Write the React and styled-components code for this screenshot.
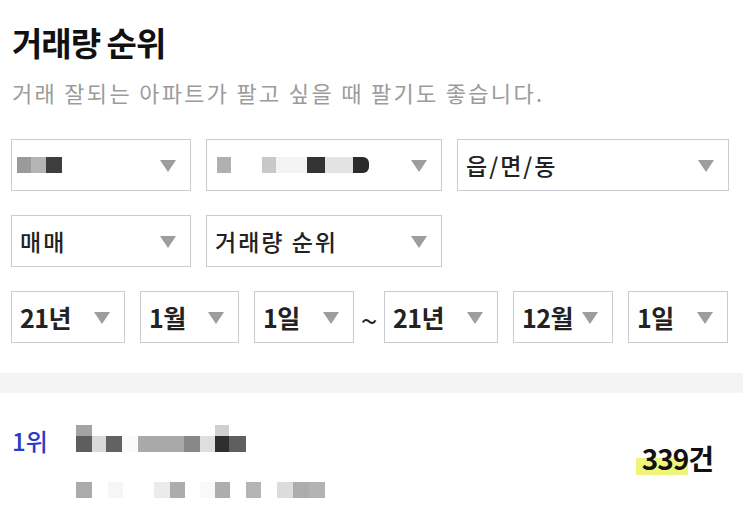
import React from "react";
import styled, { createGlobalStyle } from "styled-components";

const Global = createGlobalStyle`
  html, body { margin: 0; padding: 0; background: #fff; }
  body { font-family: "Noto Sans CJK KR", "Noto Sans", sans-serif; color: #222; }
`;

const Page = styled.div`
  width: 743px;
  overflow: hidden;
`;

const Head = styled.header`
  padding: 21px 14px 0 12px;
`;

const Title = styled.h1`
  margin: 0;
  font-size: 33px;
  line-height: 42px;
  font-weight: 700;
  color: #111;
  letter-spacing: -1px;
`;

const Sub = styled.p`
  margin: 15px 0 0;
  font-size: 22px;
  line-height: 28px;
  font-weight: 400;
  color: #9b9b9b;
  letter-spacing: 2.3px;
`;

const Filters = styled.div`
  display: flex;
  flex-direction: column;
  gap: 24px;
  padding: 33px 14px 0 11px;
`;

const Row = styled.div`
  display: flex;
  align-items: center;
  gap: 15px;
`;

const Select = styled.div`
  box-sizing: border-box;
  width: ${(p) => p.$w}px;
  height: 52px;
  border: 1px solid #c9cdd2;
  display: flex;
  align-items: center;
  justify-content: space-between;
  padding: 0 14px 0 8px;
  font-size: ${(p) => (p.$date ? 25 : 23)}px;
  font-weight: ${(p) => (p.$date ? 700 : 500)};
  letter-spacing: ${(p) => (p.$date ? -0.5 : 2)}px;
  color: #222;
  white-space: nowrap;
  flex: none;
`;

const Arrow = styled.span`
  flex: none;
  width: 0;
  height: 0;
  border-left: 8px solid transparent;
  border-right: 8px solid transparent;
  border-top: 12px solid #9d9d9d;
  margin-top: 1px;
`;

const Tilde = styled.span`
  width: 30px;
  margin: 4px -15px 0;
  text-align: center;
  font-size: 30px;
  font-weight: 400;
  color: #222;
`;

const Pixels = styled.div`
  display: flex;
  align-items: ${(p) => p.$align || "center"};
  margin-left: ${(p) => p.$shift || 0}px;
`;

const Px = styled.span`
  display: block;
  width: ${(p) => p.$w || 15}px;
  height: ${(p) => p.$h || 15}px;
  background: ${(p) => p.$c};
  border-radius: ${(p) => (p.$round ? "0 6px 6px 0" : "0")};
`;

const Stack = styled.span`
  display: flex;
  flex-direction: column;
`;

const Band = styled.div`
  height: 20px;
  background: #f4f4f4;
  margin-top: 30px;
`;

const Item = styled.div`
  display: grid;
  grid-template-columns: 64px 1fr auto;
  padding: 32px 30px 0 12px;
`;

const Rank = styled.div`
  font-size: 24px;
  font-weight: 500;
  color: #2b3bc3;
  line-height: 30px;
  margin-top: 1px;
`;

const Info = styled.div`
  display: flex;
  flex-direction: column;
  gap: 30px;
`;

const Count = styled.div`
  font-size: 28px;
  font-weight: 700;
  color: #111;
  letter-spacing: -1px;
  line-height: 34px;
  margin-top: 16px;
`;

const Mark = styled.span`
  padding-left: 6px;
  margin-left: -6px;
  background: linear-gradient(transparent 50%, #f1f47c 50%, #f1f47c 92%, transparent 92%);
`;

const Blur = ({ cells, h, shift }) => (
  <Pixels $shift={shift}>
    {cells.map(([w, c, round], i) => (
      <Px key={i} $w={w} $h={h} $c={c} $round={round} />
    ))}
  </Pixels>
);

const selects1 = [
  { w: 180, shift: -3, blur: [[14, "#9a9a9a"], [15, "#b5b5b5"], [16, "#3e3e3e"]] },
  {
    w: 236,
    shift: 2,
    blur: [[14, "#b0b0b0"], [31, "#fff"], [14, "#c8c8c8"], [31, "#f3f3f3"], [18, "#333"], [28, "#e3e3e3"], [16, "#2b2b2b", true]],
  },
  { w: 272, text: "읍/면/동" },
];

const dates = [
  { w: 114, t: "21년" },
  { w: 99, t: "1월" },
  { w: 100, t: "1일" },
  { tilde: true },
  { w: 114, t: "21년" },
  { w: 100, t: "12월" },
  { w: 100, t: "1일" },
];

export default function App() {
  return (
    <Page>
      <Global />
      <Head>
        <Title>거래량 순위</Title>
        <Sub>거래 잘되는 아파트가 팔고 싶을 때 팔기도 좋습니다.</Sub>
      </Head>
      <Filters>
        <Row>
          {selects1.map((s, i) => (
            <Select key={i} $w={s.w}>
              {s.text ? s.text : <Blur cells={s.blur} h={16} shift={s.shift} />}
              <Arrow />
            </Select>
          ))}
        </Row>
        <Row>
          <Select $w={180}>
            매매
            <Arrow />
          </Select>
          <Select $w={236}>
            거래량 순위
            <Arrow />
          </Select>
        </Row>
        <Row>
          {dates.map((d, i) =>
            d.tilde ? (
              <Tilde key={i}>~</Tilde>
            ) : (
              <Select key={i} $w={d.w} $date>
                {d.t}
                <Arrow />
              </Select>
            )
          )}
        </Row>
      </Filters>
      <Band />
      <Item>
        <Rank>1위</Rank>
        <Info>
          <Pixels $align="flex-end">
            <Stack>
              <Px $w={16} $h={11} $c="#a3a3a3" />
              <Px $w={16} $h={16} $c="#5e5e5e" />
            </Stack>
            <Px $w={14} $h={16} $c="#dadada" />
            <Px $w={16} $h={16} $c="#626262" />
            <Px $w={16} $h={16} $c="#fafafa" />
            <Px $w={46} $h={16} $c="#a9a9a9" />
            <Px $w={16} $h={16} $c="#888" />
            <Px $w={15} $h={16} $c="#dedede" />
            <Stack>
              <Px $w={14} $h={11} $c="#d0d0d0" />
              <Px $w={14} $h={16} $c="#2f2f2f" />
            </Stack>
            <Px $w={17} $h={16} $c="#5f5f5f" />
          </Pixels>
          <Blur
            h={16}
            cells={[
              [16, "#ababab"], [16, "#fff"], [15, "#f6f6f6"], [31, "#fff"], [16, "#ebebeb"], [15, "#abacae"],
              [15, "#fff"], [15, "#f9f9f9"], [15, "#adadad"], [16, "#fff"], [15, "#b5b5b5"], [16, "#fff"],
              [16, "#dcdcdc"], [16, "#adadad"], [16, "#b3b3b3"],
            ]}
          />
        </Info>
        <Count>
          <Mark>339</Mark>건
        </Count>
      </Item>
    </Page>
  );
}
